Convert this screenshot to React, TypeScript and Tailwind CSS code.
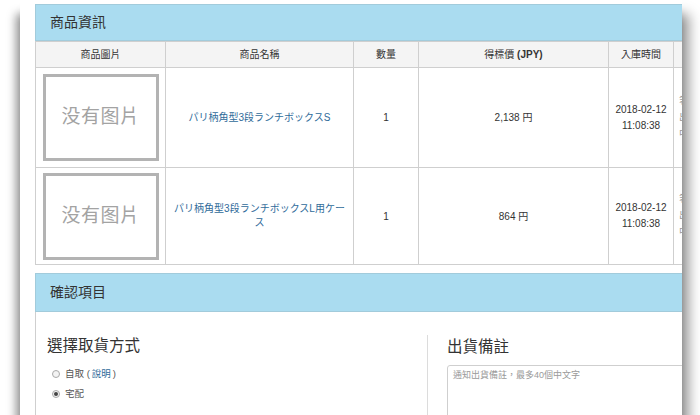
import React from "react";

const rows = [
  { name: "パリ柄角型3段ランチボックスS", qty: "1", price: "2,138 円", date: "2018-02-12", time: "11:08:38", h: "h-[100px]" },
  { name: "パリ柄角型3段ランチボックスL用ケース", qty: "1", price: "864 円", date: "2018-02-12", time: "11:08:38", h: "h-[97px]" },
];

function NoImage() {
  return (
    <div className="mx-auto w-[116px] h-[87px] border-[3px] border-[#b3b3b3] flex items-center justify-center text-[19px] text-[#a3a3a3] tracking-[0.5px]">
      没有图片
    </div>
  );
}

function Radio({ checked }: { checked?: boolean }) {
  return (
    <span className="inline-flex w-[8px] h-[8px] rounded-full border border-[#a9a9a9] bg-[#f3f3f3] items-center justify-center mr-[5px]">
      {checked && <span className="w-[4px] h-[4px] rounded-full bg-[#444]" />}
    </span>
  );
}

export default function App() {
  return (
    <div className="w-[700px] h-[415px] bg-white overflow-hidden font-['Liberation_Sans','Noto_Sans_CJK_TC',sans-serif] text-[#333]">
      <div className="ml-[20px] w-[662px] h-[415px] bg-white overflow-hidden pt-[4px] pl-[15px] shadow-[-4px_14px_9px_rgba(0,0,0,0.4),7px_14px_12px_rgba(0,0,0,0.4)]">
        {/* Panel 1 */}
        <div className="w-[720px]">
          <div className="h-[37px] bg-[#aadcf0] border border-[#a2cbdb] flex items-center pl-[14px] text-[14px] text-[#333]">
            商品資訊
          </div>
          <table className="border-collapse table-fixed w-[720px] text-[10px]">
            <colgroup>
              <col className="w-[130px]" />
              <col className="w-[188px]" />
              <col className="w-[65px]" />
              <col className="w-[190px]" />
              <col className="w-[65px]" />
              <col className="w-[82px]" />
            </colgroup>
            <thead>
              <tr className="bg-[#f4f4f4]">
                {["商品圖片", "商品名稱", "數量"].map((t) => (
                  <th key={t} className="h-[26px] border border-[#cfcfcf] font-normal text-center text-[#333]">{t}</th>
                ))}
                <th className="h-[26px] border border-[#cfcfcf] font-normal text-center">
                  得標價 <span className="font-bold">(JPY)</span>
                </th>
                <th className="h-[26px] border border-[#cfcfcf] font-normal text-center">入庫時間</th>
                <th className="h-[26px] border border-[#cfcfcf] font-normal text-center">狀態</th>
              </tr>
            </thead>
            <tbody>
              {rows.map((r, i) => (
                <tr key={i}>
                  <td className={`${r.h} border border-[#cfcfcf] align-middle`}>
                    <NoImage />
                  </td>
                  <td className="border border-[#cfcfcf] text-center px-[8px] text-[#2f6b9a] leading-[14px]">{r.name}</td>
                  <td className="border border-[#cfcfcf] text-center">{r.qty}</td>
                  <td className="border border-[#cfcfcf] text-center">{r.price}</td>
                  <td className="border border-[#cfcfcf] text-center leading-[16px]">
                    {r.date}
                    <br />
                    {r.time}
                  </td>
                  <td className="border border-[#cfcfcf] pl-[5px] text-[#999] leading-[16px]">
                    等待
                    <br />
                    出貨
                    <br />
                    中
                  </td>
                </tr>
              ))}
            </tbody>
          </table>
        </div>

        {/* Panel 2 */}
        <div className="w-[720px] mt-[8px]">
          <div className="h-[39px] bg-[#aadcf0] border border-[#a2cbdb] flex items-center pl-[14px] text-[14px] text-[#333]">
            確認項目
          </div>
          <div className="border-l border-[#cfcfcf] flex h-[120px]">
            <div className="w-[391px] pl-[11px] pt-[23px]">
              <div className="text-[15.5px] text-[#333] leading-[22px]">選擇取貨方式</div>
              <div className="mt-[10px] pl-[5px] text-[9.5px] text-[#555] flex items-center h-[14px]">
                <Radio />
                自取 ( <span className="text-[#2f6b9a] mx-[2px]">說明</span> )
              </div>
              <div className="mt-[6px] pl-[5px] text-[9.5px] text-[#555] flex items-center h-[14px]">
                <Radio checked />
                宅配
              </div>
            </div>
            <div className="mt-[23px] border-l border-[#dcdcdc] pl-[19px] pt-[1px] flex-1">
              <div className="text-[15.5px] text-[#333] leading-[22px]">出貨備註</div>
              <div className="mt-[7px] w-[300px] h-[60px] border border-[#cfcfcf] rounded-[3px] px-[5px] pt-[3px] text-[9px] text-[#9a9a9a]">
                通知出貨備註，最多40個中文字
              </div>
            </div>
          </div>
        </div>
      </div>
    </div>
  );
}
